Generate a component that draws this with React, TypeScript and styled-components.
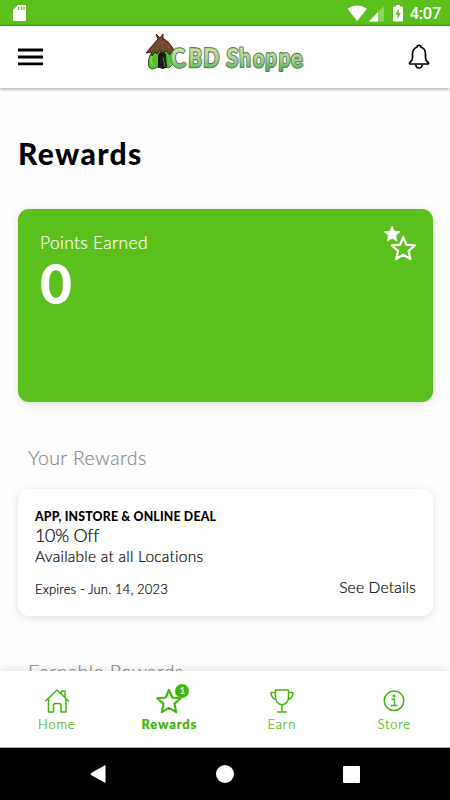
import React from "react";
import styled, { createGlobalStyle, css } from "styled-components";

const GREEN = "#5bbf1c";
const ICON_GREEN = "#41b60c";

const GlobalStyle = createGlobalStyle`
  * { box-sizing: border-box; }
  body { margin: 0; background: #fff; }
`;

const Screen = styled.div`
  width: 450px;
  height: 800px;
  display: flex;
  flex-direction: column;
  overflow: hidden;
  background: #fefefe;
  color: #000;
  font-family: Lato, sans-serif;
  font-variant-ligatures: none;
  white-space: nowrap;
`;

const StatusBar = styled.header`
  flex: none;
  height: 26px;
  padding: 0 9px 0 13px;
  display: flex;
  align-items: center;
  justify-content: space-between;
  background: ${GREEN};
  border-bottom: 1px solid #38b40c;
  color: #fff;
`;

const StatusIcons = styled.div`
  display: flex;
  align-items: center;
`;

const Clock = styled.span`
  margin-left: 7px;
  font: 500 16.5px/26px Roboto, sans-serif;
  letter-spacing: -0.3px;
  padding-top: 2px;
`;

const AppBar = styled.div`
  flex: none;
  height: 62px;
  padding: 0 20px 0 18px;
  display: grid;
  grid-template-columns: 128px 1fr auto;
  align-items: center;
  background: #fff;
  box-shadow: 0 1px 4px rgba(0, 0, 0, 0.38);
  z-index: 1;
`;

const MenuIcon = styled.svg`
  display: block;
`;

const Content = styled.main`
  flex: 1;
  min-height: 0;
  overflow: hidden;
  padding: 47px 17px 0 18px;
`;

const Title = styled.h1`
  margin: 0;
  font-size: 30px;
  line-height: 36px;
  font-weight: 900;
  letter-spacing: 1.35px;
`;

const cardShape = css`
  border-radius: 11px;
  box-shadow: 0 2px 10px rgba(0, 0, 0, 0.13);
`;

const lightText = css`
  font-weight: 300;
  -webkit-text-stroke: 0.2px currentColor;
`;

const PointsCard = styled.section`
  ${cardShape}
  height: 193px;
  margin-top: 38px;
  padding: 23px 16px 0 22px;
  display: flex;
  justify-content: space-between;
  align-items: flex-start;
  background: ${GREEN};
  color: #fff;
  svg { margin-top: -7px; }
`;

const PointsLabel = styled.div`
  ${lightText}
  font-size: 17.5px;
  line-height: 22px;
  letter-spacing: 0.3px;
`;

const PointsValue = styled.div`
  font-size: 55px;
  line-height: 60px;
  font-weight: 900;
  margin-top: -1px;
`;

const SectionTitle = styled.h2`
  margin: 44px 0 0 10px;
  font-size: 19.5px;
  line-height: 24px;
  font-weight: 300;
  -webkit-text-stroke: 0.2px currentColor;
  color: #8a8a8a;
  letter-spacing: 0.4px;
`;

const RewardCard = styled.article`
  ${cardShape}
  height: 127px;
  margin-top: 19px;
  margin-bottom: 43px;
  padding: 19px 17px 0 17px;
  background: #fff;
`;

const RewardChannel = styled.div`
  font-size: 12.3px;
  line-height: 18px;
  font-weight: 900;
  letter-spacing: 0.18px;
`;

const RewardName = styled.div`
  ${lightText}
  font-size: 17.8px;
  line-height: 19px;
  letter-spacing: -0.2px;
`;

const RewardPlace = styled.div`
  ${lightText}
  font-size: 15.5px;
  line-height: 23px;
  letter-spacing: 0.25px;
`;

const RewardFooter = styled.div`
  margin-top: 10px;
  display: flex;
  justify-content: space-between;
`;

const Expiry = styled.span`
  ${lightText}
  font-size: 13px;
  line-height: 22px;
  letter-spacing: 0.15px;
`;

const DetailsLink = styled.a`
  ${lightText}
  font-size: 15.5px;
  line-height: 18px;
  letter-spacing: 0.2px;
`;

const TabBar = styled.nav`
  flex: none;
  height: 77px;
  display: grid;
  grid-template-columns: repeat(4, 1fr);
  background: #fff;
  border-bottom: 1px solid #aaa;
  box-shadow: 0 -1px 8px rgba(0, 0, 0, 0.13);
  z-index: 1;
`;

const Tab = styled.div<{ $active?: boolean }>`
  ${lightText}
  display: flex;
  flex-direction: column;
  align-items: center;
  padding: 17px 0 0 1px;
  color: ${ICON_GREEN};
  font-size: 13px;
  line-height: 18px;
  letter-spacing: 0.8px;
  font-weight: ${(p) => (p.$active ? 900 : 300)};
`;

const TabIcon = styled.div`
  position: relative;
  width: 26px;
  height: 27px;
  svg { display: block; }
`;

const Badge = styled.span`
  position: absolute;
  left: 19px;
  top: -4px;
  width: 14px;
  height: 14px;
  border-radius: 50%;
  background: ${ICON_GREEN};
  color: #fff;
  font-size: 9px;
  font-weight: 400;
  line-height: 14px;
  letter-spacing: 0;
  text-align: center;
`;

const SystemNav = styled.footer`
  flex: none;
  height: 52px;
  background: #000;
  display: flex;
  align-items: center;
  justify-content: space-between;
  padding: 0 90px;
`;

const LETTERS: [string, number, number, number, number][] = [
  ["C", 25.5, 35, -4, 0.85], ["B", 42, 34, 2, 0.8], ["D", 57, 34, 1, 0.82],
  ["S", 80, 34, 2, 0.85], ["h", 93.5, 34, -2, 0.78], ["o", 106.5, 34, 3, 0.78],
  ["p", 119, 33.5, 2, 0.78], ["p", 132.5, 33.5, 2, 0.78], ["e", 145.5, 35, -5, 0.85],
];

const Logo = () => (
  <svg width="164" height="48" viewBox="0 0 164 48">
    <defs>
      <linearGradient id="letters" gradientUnits="userSpaceOnUse" x1="0" y1="-20" x2="0" y2="3">
        <stop offset="0" stopColor="#cfe8a0" />
        <stop offset="0.5" stopColor="#a5d58a" />
        <stop offset="1" stopColor="#50b65a" />
      </linearGradient>
    </defs>
    <path d="M6 19Q1 26 3 34Q6 38 11 34L15 35L24 34Q31 29 26 18L15 12Z" fill="#4fc52d" stroke="#274f17" />
    <path d="M7 21Q3 27 7 32M25 20Q28 27 24 33" stroke="#83da3e" strokeWidth="1.5" fill="none" />
    <path d="M12 34V22Q16 15 20 21L21 34L17 36Z" fill="#171b12" />
    <path d="M17 24L19 34" stroke="#75736c" />
    <path d="M10 1L14 5L17 1L17 5Q23 9 26 14Q28 17 30 20L26 20L24 19L24 22L20 18L16 20L14 17L11 21L9 19L6 23L5 19L0 20Q5 14 12 6Z" fill="#70472d" stroke="#392414" strokeWidth="1" />
    <path d="M13 8Q8 12 5 18M15 8L11 17M16 8L17 17M17 8Q22 13 25 17" stroke="#8f6040" fill="none" strokeWidth=".7" />
    <g fontFamily="Lato, sans-serif" fontSize="26" fontWeight="900">
      {LETTERS.map(([c, x, y, r, s], i) => (
        <g key={i} transform={`translate(${x} ${y}) rotate(${r}) scale(${s} 1)`} strokeLinejoin="round">
          <text fill="url(#letters)" stroke="#667562" strokeWidth="2.2" paintOrder="stroke">{c}</text>
        </g>
      ))}
    </g>
  </svg>
);

const STAR = "M12 1.8L15 8.8L22.8 9.5L17 14.6L18.7 22.3L12 18.3L5.3 22.3L7 14.6L1.2 9.5L9 8.8Z";

export default function App() {
  return (
    <Screen>
      <GlobalStyle />
      <StatusBar>
        <svg width="13" height="16" viewBox="0 0 13 16">
          <path d="M5 0H12Q13 0 13 1V15Q13 16 12 16H1Q0 16 0 15V5Z" fill="#fff" />
          <path d="M5.5 2V5M8.5 2V5M11 2V5" stroke={GREEN} strokeWidth="1.2" />
        </svg>
        <StatusIcons>
          <svg width="56" height="18" viewBox="0 0 56 18">
            <path d="M0.5 4.7Q10 -1.8 20 4.7L10.2 17Z" fill="#fff" />
            <path d="M37 1.5V17.5H22Z" fill="#fff" opacity=".3" />
            <path d="M31 8V17.5H22Z" fill="#fff" />
            <path d="M47 2.5H49V1H53V2.5H55Q56 2.5 56 3.5V16.5Q56 17.5 55 17.5H47Q46 17.5 46 16.5V3.5Q46 2.5 47 2.5Z" fill="#fff" />
            <path d="M51.6 4.5L48.4 10.5H50.6V15L53.8 9H51.6Z" fill={GREEN} />
          </svg>
          <Clock>4:07</Clock>
        </StatusIcons>
      </StatusBar>

      <AppBar>
        <MenuIcon width="25" height="18" viewBox="0 0 25 18">
          <path d="M0 2H25M0 9H25M0 15.8H25" stroke="#000" strokeWidth="2.8" />
        </MenuIcon>
        <Logo />
        <svg width="22" height="26" viewBox="0 0 22 26" fill="none" stroke="#000" strokeWidth="1.7" strokeLinejoin="round">
          <path d="M9 3.2Q9 1.3 11 1.3Q13 1.3 13 3.2Q17.5 4.5 17.5 10V14Q17.5 16.5 20.2 18.5Q21.2 20 20 20H2Q.8 20 1.8 18.5Q4.5 16.5 4.5 14V10Q4.5 4.5 9 3.2Z" />
          <path d="M7.7 20.5Q8 24 11 24Q14 24 14.3 20.5" />
        </svg>
      </AppBar>

      <Content>
        <Title>Rewards</Title>
        <PointsCard>
          <div>
            <PointsLabel>Points Earned</PointsLabel>
            <PointsValue>0</PointsValue>
          </div>
          <svg width="34" height="38" viewBox="0 0 34 38">
            <path transform="translate(.4 -.2) scale(.73)" d={STAR} fill="#fff" stroke="#fff" strokeLinejoin="round" />
            <path transform="translate(7.6 10.4) scale(1.06)" d={STAR} fill={GREEN} stroke="#fff" strokeWidth="2.1" strokeLinejoin="round" />
          </svg>
        </PointsCard>

        <SectionTitle>Your Rewards</SectionTitle>
        <RewardCard>
          <RewardChannel>APP, INSTORE &amp; ONLINE DEAL</RewardChannel>
          <RewardName>10% Off</RewardName>
          <RewardPlace>Available at all Locations</RewardPlace>
          <RewardFooter>
            <Expiry>Expires - Jun. 14, 2023</Expiry>
            <DetailsLink>See Details</DetailsLink>
          </RewardFooter>
        </RewardCard>
        <SectionTitle>Earnable Rewards</SectionTitle>
      </Content>

      <TabBar>
        <Tab>
          <TabIcon>
            <svg width="26" height="26" viewBox="0 0 26 26" fill="none" stroke="currentColor" strokeWidth="1.5" strokeLinejoin="round" strokeLinecap="round">
              <path d="M1.5 13L13 2L24.5 13M4.5 10.5V24H9.5V17.5Q9.5 15.5 11.5 15.5H15Q17 15.5 17 17.5V24H22V10.5M17.5 6V3H21V9.5" />
            </svg>
          </TabIcon>
          Home
        </Tab>
        <Tab $active>
          <TabIcon>
            <svg width="26" height="26" viewBox="0 0 24 24" fill="none" stroke="currentColor" strokeWidth="2" strokeLinejoin="round">
              <path d={STAR} />
            </svg>
            <Badge>1</Badge>
          </TabIcon>
          Rewards
        </Tab>
        <Tab>
          <TabIcon>
            <svg width="26" height="26" viewBox="0 0 26 26" fill="none" stroke="currentColor" strokeWidth="1.5" strokeLinejoin="round" strokeLinecap="round">
              <path d="M6.5 2H19.5V9.5Q19.5 15 13 17Q6.5 15 6.5 9.5ZM6.5 4.5H2Q2 9.5 6.5 11.5M19.5 4.5H24Q24 9.5 19.5 11.5M13 17V24M8.5 24H17.5" />
            </svg>
          </TabIcon>
          Earn
        </Tab>
        <Tab>
          <TabIcon>
            <svg width="26" height="26" viewBox="0 0 26 26" fill="none" stroke="currentColor" strokeWidth="1.5">
              <circle cx="13" cy="12.7" r="9.8" />
              <path d="M10.5 11.2H13.5V17.4M10 17.5H16.5" />
              <circle cx="13" cy="8" r="1.5" fill="currentColor" stroke="none" />
            </svg>
          </TabIcon>
          Store
        </Tab>
      </TabBar>

      <SystemNav>
        <svg width="16" height="18" viewBox="0 0 16 18"><path d="M15.5 0V18L1 10Q0 9 1 8Z" fill="#fff" /></svg>
        <svg width="18" height="18" viewBox="0 0 18 18"><circle cx="9" cy="9" r="9" fill="#fff" /></svg>
        <svg width="17" height="17" viewBox="0 0 17 17"><rect width="17" height="17" rx="1" fill="#fff" /></svg>
      </SystemNav>
    </Screen>
  );
}
